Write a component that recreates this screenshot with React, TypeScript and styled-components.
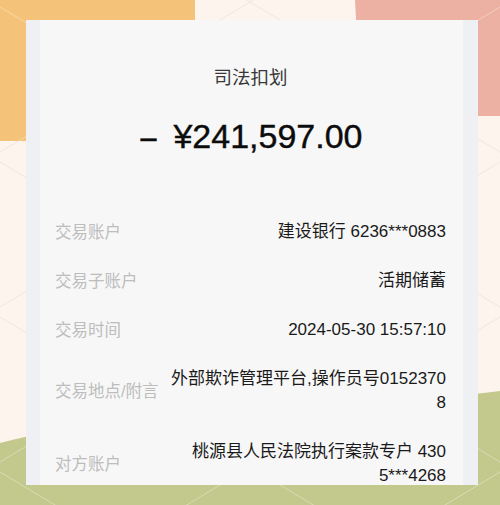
import React from 'react';
import styled, { createGlobalStyle } from 'styled-components';

const GlobalStyle = createGlobalStyle`
  html, body {
    margin: 0;
    padding: 0;
    background: #fdf4ee;
  }
  body {
    font-family: "Liberation Sans", "Noto Sans CJK SC", sans-serif;
  }
`;

interface Detail {
  label: string;
  lines: string[];
}

const details: Detail[] = [
  { label: '交易账户', lines: ['建设银行 6236***0883'] },
  { label: '交易子账户', lines: ['活期储蓄'] },
  { label: '交易时间', lines: ['2024-05-30 15:57:10'] },
  { label: '交易地点/附言', lines: ['外部欺诈管理平台,操作员号0152370', '8'] },
  { label: '对方账户', lines: ['桃源县人民法院执行案款专户 430', '5***4268'] },
];

// faint diamond lattice over the backdrop
const latticeLines = (stroke: string) => {
  const out: React.ReactNode[] = [];
  for (let k = -4; k < 6; k++) {
    const a = 152 + 155 * k;
    const b = -148 + 155 * k;
    out.push(<line key={`a${k}`} x1={0} y1={a} x2={500} y2={a - 300} stroke={stroke} strokeWidth={1} />);
    out.push(<line key={`b${k}`} x1={0} y1={b} x2={500} y2={b + 300} stroke={stroke} strokeWidth={1} />);
  }
  return out;
};

const Backdrop = () => (
  <BackdropSvg width="500" height="505" viewBox="0 0 500 505">
    <rect width="500" height="505" fill="#fdf4ee" />
    {latticeLines('rgba(200,160,140,0.28)')}
    <path d="M0,0 H195 V100 Q195,141 153,141 H0 Z" fill="#f4c278" />
    <path d="M355,0 H500 V116 H420 Q360,116 358,56 Z" fill="#edb1a3" />
    <path d="M0,443 C150,405 350,410 500,391 V505 H0 Z" fill="#c3c88d" />
    {latticeLines('rgba(255,255,255,0.35)')}
  </BackdropSvg>
);

export default function App() {
  return (
    <>
      <GlobalStyle />
      <Page>
        <Backdrop />
        <Card>
          <Title>司法扣划</Title>
          <Amount>
            <Sign>–</Sign>¥241,597.00
          </Amount>
          <DetailList>
            {details.map((d) => (
              <Row key={d.label}>
                <Label>{d.label}</Label>
                <Value>
                  {d.lines.map((l, i) => (
                    <React.Fragment key={i}>
                      {i > 0 && <br />}
                      {l}
                    </React.Fragment>
                  ))}
                </Value>
              </Row>
            ))}
          </DetailList>
        </Card>
      </Page>
    </>
  );
}

const Page = styled.div`
  position: relative;
  width: 500px;
  height: 505px;
  overflow: hidden;
  box-sizing: border-box;
  padding: 20px 22px 20px 26px;
`;

const BackdropSvg = styled.svg`
  position: absolute;
  left: 0;
  top: 0;
  z-index: 0;
`;

const Card = styled.div`
  position: relative;
  z-index: 1;
  height: 100%;
  box-sizing: border-box;
  display: flex;
  flex-direction: column;
  align-items: center;
  background: #f7f7f7;
  border-left: 14px solid #eef0f3;
  border-right: 15px solid #eef0f3;
  padding: 46px 17px 0 15px;
  overflow: hidden;
`;

const Title = styled.div`
  font-size: 18.5px;
  line-height: 24px;
  color: #383838;
`;

const Amount = styled.div`
  margin-top: 26px;
  font-size: 34px;
  line-height: 40px;
  font-weight: 400;
  color: #0c0c0c;
  -webkit-text-stroke: 0.4px #0c0c0c;
`;

const Sign = styled.span`
  display: inline-block;
  margin-right: 16px;
  transform: scaleX(0.85);
`;

const DetailList = styled.div`
  align-self: stretch;
  margin-top: 64px;
  display: flex;
  flex-direction: column;
  gap: 25px;
`;

const Row = styled.div`
  display: flex;
  align-items: center;
  justify-content: space-between;
`;

const Label = styled.div`
  flex-shrink: 0;
  font-size: 16.5px;
  line-height: 24px;
  color: #bdbdbd;
`;

const Value = styled.div`
  font-size: 17px;
  line-height: 24px;
  color: #1a1a1a;
  text-align: right;
  white-space: nowrap;
`;
